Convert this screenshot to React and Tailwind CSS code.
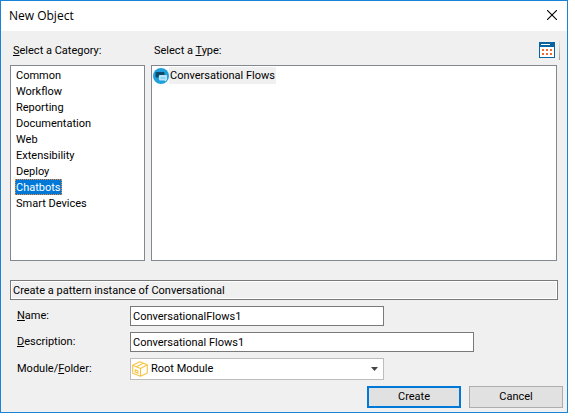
import React, { useState } from 'react';

const categories = ['Common', 'Workflow', 'Reporting', 'Documentation', 'Web', 'Extensibility', 'Deploy', 'Chatbots', 'Smart Devices'];

function ChatIcon() {
  return (
    <svg viewBox="0 0 16 16" className="size-4 shrink-0" aria-hidden="true">
      <circle cx="8" cy="8" r="8" fill="#1f9fdc" />
      <path d="M3.500 4h7a1 1 0 0 1 1 1v2H7a1.500 1.500 0 0 0-1.500 1.500V9.500h-2a1 1 0 0 1-1-1V5a1 1 0 0 1 1-1z" fill="#0b4a6b" />
      <path d="M7 7h6a1 1 0 0 1 1 1v3.500a1 1 0 0 1-1 1v1.300L11.500 12.500H7a1 1 0 0 1-1-1V8a1 1 0 0 1 1-1z" fill="#b9e4fa" />
      <path d="M7.500 10h5" stroke="#6cc3ee" strokeWidth="1" />
    </svg>
  );
}

function CalendarIcon() {
  return (
    <svg viewBox="0 0 16 16" className="size-4" shapeRendering="crispEdges" aria-hidden="true">
      <path fill="#0a64a0" d="M0 0h16v16H0z" />
      <path fill="#fff" d="M1 5h14v10H1zM2 2h9v1H2z" />
      <path fill="#f26b2c" d="M3 7h2v2H3zM7 7h2v2H7zM11 7h2v2h-2zM3 11h2v2H3zM7 11h2v2H7zM11 11h2v2h-2z" />
    </svg>
  );
}

function ModuleIcon() {
  return (
    <svg viewBox="0 0 16 16" className="size-4" fill="none" stroke="#f8c344" strokeWidth="1.100" strokeLinejoin="round" aria-hidden="true">
      <path d="M.7 4.300 7.800.8l7.500 3v8.200l-6.800 3.300-7.800-3.100z" />
      <path d="M.7 4.300l7.800 3.200 6.800-3.700M8.500 7.500v7.800M4.500 5.800l7-3.500M3.200 8.800l2.800 1.200v2.200l-2.800-1.100z" />
    </svg>
  );
}

export default function App() {
  const [category, setCategory] = useState('Chatbots');
  return (
    <main className="bg-white pr-[7px] pb-[6px] font-['Roboto',sans-serif] text-[11px] text-black">
      <form className="border border-[#1883d7] bg-[#f0f0f0]" onSubmit={(e) => e.preventDefault()}>
        <header className="flex h-[30px] items-center justify-between bg-white pr-2.5 pl-2 font-['Open_Sans',sans-serif] text-xs">
          <h1>New Object</h1>
          <button type="button" aria-label="Close" className="pb-0.5">
            <svg viewBox="0 0 10 10" className="size-2.5" stroke="#000" strokeWidth="1.100" aria-hidden="true">
              <path d="M0 0l10 10M10 0l-10 10" />
            </svg>
          </button>
        </header>

        <div className="flex flex-col pt-[9px] pr-1 pb-1 pl-[9px]">
          <div className="flex items-start gap-1.5 pr-1.5">
            <section className="w-[135px] shrink-0">
              <h2 id="cat" className="h-[25px] pt-[3px] pl-[3px] leading-4"><u>S</u>elect a Category:</h2>
              <ul aria-labelledby="cat" className="h-[196px] border border-[#828790] bg-white pt-px pl-1">
                {categories.map((c) => (
                  <li key={c} className="flex h-4">
                    <button
                      type="button"
                      onClick={() => setCategory(c)}
                      className={c === category ? 'border border-dotted border-[#ff8728] bg-[#0078d7] pt-px leading-[14px] text-white' : 'px-px pt-px leading-4'}
                    >
                      {c}
                    </button>
                  </li>
                ))}
              </ul>
            </section>
            <section className="min-w-0 grow">
              <div className="flex h-[25px] items-start justify-between">
                <h2 id="type" className="pt-[3px] pl-[3px] leading-4">Select a <u>T</u>ype:</h2>
                <div className="-mr-[3px] flex gap-1">
                  <button type="button" aria-label="View"><CalendarIcon /></button>
                  <span className="h-5 w-px bg-linear-to-b from-[#e8e8e8] to-[#a0a0a0]" />
                </div>
              </div>
              <ul aria-labelledby="type" className="h-[196px] border border-[#828790] bg-white p-px">
                <li>
                  <button type="button" className="flex items-center">
                    <ChatIcon />
                    <span className="bg-[#f0f0f0] px-px pt-px leading-4">Conversational Flows</span>
                  </button>
                </li>
              </ul>
            </section>
          </div>

          <p className="mt-[19px] mr-[5px] h-5 border border-[#7a7a7a] bg-[#f0f0f0] pt-px pl-0.5 leading-[18px] shadow-[inset_0_0_0_1px_#fff]">Create a pattern instance of Conversational</p>

          <div className="mt-1.5 grid grid-cols-[120px_1fr] items-center gap-y-1.5">
            <label htmlFor="name" className="pt-px pl-[7px]"><u>N</u>ame:</label>
            <input id="name" defaultValue="ConversationalFlows1" className="h-5 w-[254px] border border-[#7a7a7a] bg-white px-0.5 outline-none" />
            <label htmlFor="desc" className="pt-px pl-[7px]"><u>D</u>escription:</label>
            <input id="desc" defaultValue="Conversational Flows1" className="h-5 w-[344px] border border-[#7a7a7a] bg-white px-0.5 outline-none" />
            <label htmlFor="module" className="pt-px pl-[7px]">Module/<u>F</u>older:</label>
            <div className="grid w-[254px] items-center">
              <select id="module" className="col-start-1 row-start-1 h-[22px] appearance-none border border-[#bdbdbd] bg-white pt-px pl-5 outline-none">
                <option>Root Module</option>
              </select>
              <span className="pointer-events-none col-start-1 row-start-1 flex items-center justify-between pr-1.5 pl-0.5">
                <ModuleIcon />
                <svg viewBox="0 0 7 4" className="h-1 w-[7px]" fill="#444" aria-hidden="true"><path d="M0 0h7L3.500 4z" /></svg>
              </span>
            </div>
          </div>

          <div className="mt-1.5 flex justify-end gap-2">
            <button type="submit" className="h-[22px] w-[94px] border-2 border-[#0078d7] bg-[#e1e1e1]">Create</button>
            <button type="button" className="h-[22px] w-[94px] border border-[#adadad] bg-[#e1e1e1]">Cancel</button>
          </div>
        </div>
      </form>
    </main>
  );
}
